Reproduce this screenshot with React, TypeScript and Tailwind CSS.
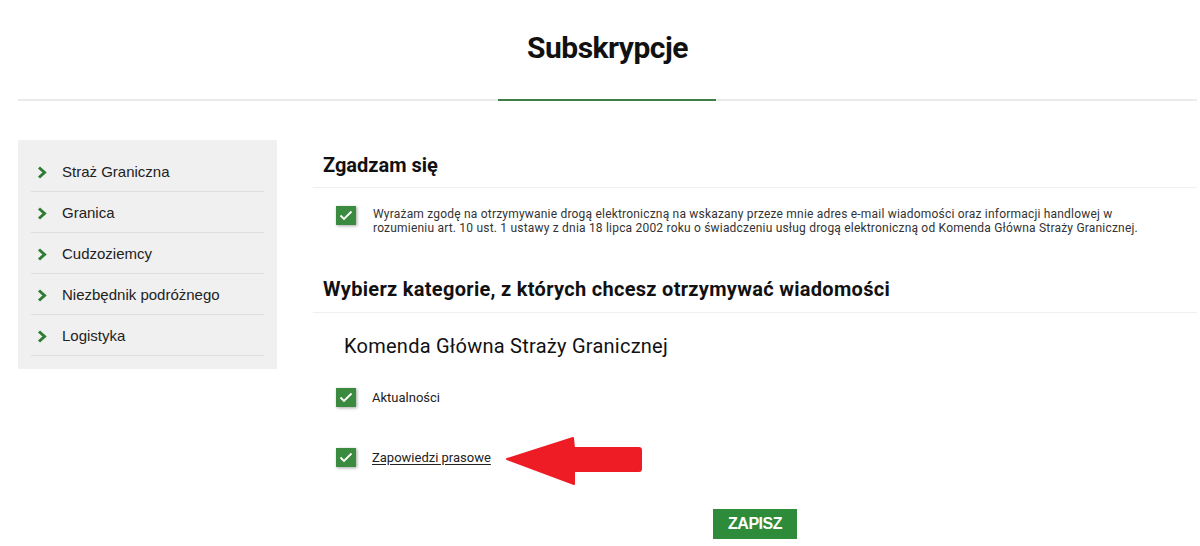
const menu = ["Straż Graniczna", "Granica", "Cudzoziemcy", "Niezbędnik podróżnego", "Logistyka"];

function Chevron() {
  return (
    <svg width="10" height="13" viewBox="0 0 10 13" className="shrink-0">
      <path d="M2 1.5 L7.5 6.5 L2 11.5" fill="none" stroke="#2f7d34" strokeWidth="3" />
    </svg>
  );
}

function Check() {
  return (
    <span className="flex h-[19px] w-[20px] shrink-0 items-center justify-center bg-[#3a8a3f] shadow-[1px_1px_3px_rgba(0,0,0,0.35)]">
      <svg width="14" height="11" viewBox="0 0 14 11">
        <path d="M1.5 5.5 L5 9 L12.5 1.5" fill="none" stroke="#fff" strokeWidth="1.8" />
      </svg>
    </span>
  );
}

function Arrow() {
  return (
    <svg width="140" height="50" viewBox="0 0 140 50" className="absolute left-[192px] top-[-11px]">
      <path d="M2 22 L68 1 L69 11 L134 11 Q136 11 136 13 L136 32 Q136 34 134 34 L69 34 L69 47 Z" fill="#ee1c25" stroke="#ee1c25" strokeWidth="2" strokeLinejoin="round" />
    </svg>
  );
}

export default function App() {
  return (
    <div className="min-h-[546px] bg-white font-['Roboto',sans-serif] text-[#222]">
      <div className="ml-[18px] mr-[3px]">
        <header className="pt-[30px]">
          <h1 className="text-center text-[30px] font-bold leading-[36px] tracking-[-0.5px] text-[#111]">Subskrypcje</h1>
          <div className="mt-[33px] flex h-[2px] justify-center bg-[#ebebeb]">
            <div className="ml-[-1px] h-[2px] w-[218px] bg-[#3f7e46]" />
          </div>
        </header>

        <div className="mt-[39px] flex">
          <aside className="w-[259px] self-start bg-[#f0f0f0] px-[13px] pt-[11px] pb-[13px] font-['Liberation_Sans',Arial,sans-serif]">
            {menu.map((m) => (
              <div key={m} className="flex h-[41px] items-center border-b border-[#dedede] pl-[6px] pt-[2px]">
                <Chevron />
                <span className="ml-[15px] text-[15px] text-[#222]">{m}</span>
              </div>
            ))}
          </aside>

          <main className="ml-[36px] flex-1">
            <section className="border-b border-[#f0f0f0] pt-[13px] pb-[10px] pl-[10px]">
              <h2 className="text-[20px] font-bold leading-[24px] text-[#111]">Zgadzam się</h2>
            </section>
            <div className="mt-[19px] flex pl-[23px]">
              <span className="mt-[-1px]"><Check /></span>
              <p className="ml-[17px] text-[12px] leading-[14px] tracking-[0.2px] text-[#333]">
                Wyrażam zgodę na otrzymywanie drogą elektroniczną na wskazany przeze mnie adres e-mail wiadomości oraz informacji handlowej w
                <br />
                rozumieniu art. 10 ust. 1 ustawy z dnia 18 lipca 2002 roku o świadczeniu usług drogą elektroniczną od Komenda Główna Straży Granicznej.
              </p>
            </div>

            <section className="mt-[42px] border-b border-[#f0f0f0] pb-[11px] pl-[10px]">
              <h2 className="text-[20px] font-bold leading-[24px] tracking-[0.3px] text-[#111]">Wybierz kategorie, z których chcesz otrzymywać wiadomości</h2>
            </section>

            <h3 className="mt-[21px] pl-[31px] text-[20px] leading-[24px] tracking-[0.25px] text-[#111]">Komenda Główna Straży Granicznej</h3>

            <div className="mt-[30px] flex items-center pl-[23px]">
              <Check />
              <span className="ml-[16px] text-[13px] text-[#222]">Aktualności</span>
            </div>
            <div className="relative mt-[40px] flex items-center pl-[23px]">
              <Check />
              <a className="ml-[16px] text-[13px] text-[#222] underline underline-offset-2">Zapowiedzi prasowe</a>
              <Arrow />
            </div>

            <div className="mt-[42px] flex justify-center">
              <button className="h-[30px] w-[84px] bg-[#2e8b3a] font-['Liberation_Sans',Arial,sans-serif] text-[16px] font-bold tracking-[-0.5px] text-white">ZAPISZ</button>
            </div>
          </main>
        </div>
      </div>
    </div>
  );
}
